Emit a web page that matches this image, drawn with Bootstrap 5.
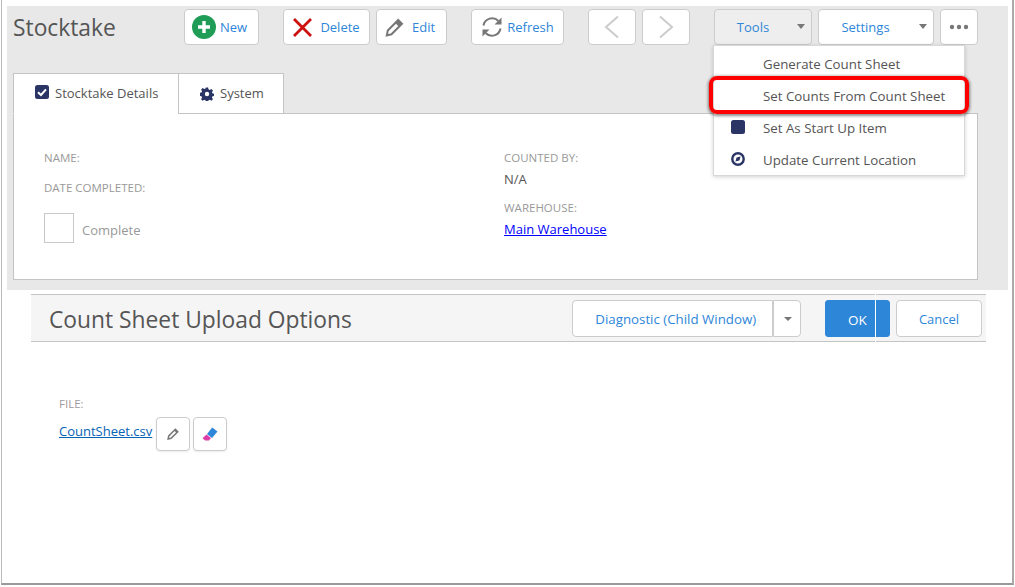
<!DOCTYPE html>
<html lang="en">
<head>
<meta charset="utf-8">
<title>Stocktake</title>
<link href="https://cdn.jsdelivr.net/npm/bootstrap@5.3.0/dist/css/bootstrap.min.css" rel="stylesheet">
<style>
html,body{height:100%;}
body{background:#fff;font-family:"Open Sans",sans-serif;font-size:13px;color:#555;overflow:hidden;}
.shot-frame{position:relative;width:1013px;height:585px;border-left:1px solid #bbb;border-right:2px solid #aaa;border-bottom:2px solid #999;margin-left:1px;padding-top:6px;background:#fff;overflow:hidden;}
.top-panel{margin-left:5px;width:1001px;height:284px;background:#e8e8e8;padding:3px 6px 0 6px;}
.tool-row{height:36px;}
.page-title{width:171px;font-size:22.8px;line-height:36px;color:#555;margin:1px 0 -1px 0;}
.tb{height:36px;background:#fff;border:1px solid #ccc;border-radius:4px;color:#2e86d8;font-size:13px;padding:2px 0 0 0;display:flex;align-items:center;justify-content:center;}
.tb:hover{background:#fff;color:#2e86d8;border-color:#ccc;}
.tb svg{position:relative;top:-1px;}
.w-new{width:75px;margin-right:24px;padding-right:4px;}
.w-del{width:87px;margin-right:6px;}
.w-edit{width:71px;margin-right:24px;padding-right:3px;}
.w-ref{width:93px;margin-right:24px;}
.w-nav{width:48px;}
.w-nav.first{margin-right:6px;}
.w-nav.last{margin-right:24px;}
.w-tools{width:98px;margin-right:6px;background:#eee;position:relative;}
.w-tools:hover{background:#eee;}
.w-set{width:116px;margin-right:6px;position:relative;}
.w-more{width:38px;}
.caret-mark{position:absolute;right:6px;top:14px;width:0;height:0;border-left:4px solid transparent;border-right:4px solid transparent;border-top:5px solid #777;}
.tb-lab-tools{margin-right:20px;}
.tb-lab-set{margin-right:21px;}
.tab-strip{margin-top:28px;height:40px;position:relative;z-index:1;}
.tab-item{height:41px;background:#fff;border:1px solid #c4c4c4;font-size:13px;color:#555;display:flex;align-items:center;}
.tab-a{width:166px;padding-left:21px;border-bottom-color:#fff;}
.tab-b{width:106px;margin-left:-1px;padding-left:21px;border-left-color:#c4c4c4;}
.tab-item svg{margin-right:6px;}
.tab-a svg{position:relative;top:-2px;margin-right:6px;}
.detail-box{width:965px;height:167px;background:#fff;border:1px solid #c4c4c4;padding:36px 30px 0 30px;}
.fld-col-a{width:460px;}
.fld-lab{font-size:11.5px;line-height:15px;color:#999;text-transform:uppercase;}
.lab-gap{margin-top:15px;}
.fld-val{font-size:13px;line-height:18px;color:#555;margin-top:5px;}
.lab-wh{margin-top:12px;}
.fld-link{font-size:13px;line-height:18px;color:#00f;margin-top:5px;display:block;}
.check-row{margin-top:18px;}
.check-sq{width:30px;height:30px;border:1px solid #c8c8c8;background:#fff;}
.check-lab{font-size:13px;color:#999;margin-left:8px;padding-top:5px;}
.menu-float{position:absolute;left:711px;top:45px;width:252px;height:131px;background:#fff;border:1px solid #d8d8d8;box-shadow:0 1px 4px rgba(0,0,0,.18);padding:3px 0 0 0;z-index:3;}
.menu-line{height:32px;display:flex;align-items:center;padding-left:49px;font-size:13.3px;color:#555;position:relative;}
.menu-ico{position:absolute;left:17px;top:7px;}
.red-mark{position:absolute;left:707px;top:76px;width:260px;height:38px;border:4px solid #f00;border-radius:8px;box-shadow:0 1px 3px 1px rgba(0,0,0,.45);z-index:4;}
.sub-head{margin:4px 0 0 29px;width:955px;height:48px;background:#f5f5f5;border-top:1px solid #c4c4c4;border-bottom:1px solid #c4c4c4;padding:5px 4px 0 18px;position:relative;}
.sub-title{font-size:22.8px;line-height:36px;color:#555;margin:2px 0 0 0;width:523px;}
.split-main{width:200.5px;height:37px;border:1px solid #ccc;border-radius:4px 0 0 4px;background:#fff;color:#2e86d8;font-size:13.3px;padding:3px 0 0 7px;}
.split-drop{width:28.5px;height:37px;border:1px solid #ccc;border-left:1px solid #ccc;border-radius:0 4px 4px 0;background:#fff;position:relative;padding:0;margin-right:24px;}
.split-drop .caret-mark{left:10px;right:auto;top:16px;border-top-width:4px;}
.ok-btn{width:65px;height:37px;background:#2e86d8;border:1px solid #2e86d8;color:#fff;font-size:13.5px;border-radius:3px;padding:3px 0 0 0;margin-right:6px;}
.ok-btn:hover{background:#2e86d8;border-color:#2e86d8;color:#fff;}
.cancel-btn{width:86px;height:37px;background:#fff;border:1px solid #ccc;color:#2e86d8;font-size:13px;border-radius:4px;padding:3px 0 0 0;}
.cancel-btn:hover{background:#fff;color:#2e86d8;border-color:#ccc;}
.seam-line{position:absolute;left:844px;top:-1px;width:1px;height:48px;background:#fff;}
.file-area{margin:54px 0 0 57px;}
.file-lab{font-size:11.5px;line-height:15px;color:#a09aa0;text-transform:uppercase;}
.file-row{margin-top:6px;height:34px;}
.file-link{font-size:13px;color:#0563b5;line-height:18px;}
.link-box{width:97px;padding-top:5px;}
.sq-btn{width:34px;height:34px;background:#fff;border:1px solid #ccc;border-radius:4px;box-shadow:0 1px 2px rgba(0,0,0,.08);padding:0;display:flex;align-items:center;justify-content:center;margin-right:3px;}
.sq-btn:hover{background:#fff;border-color:#ccc;}
</style>
</head>
<body>
<div class="shot-frame">
  <div class="top-panel">
    <div class="d-flex tool-row">
      <h1 class="page-title">Stocktake</h1>
      <button class="btn tb w-new" type="button">
        <svg class="me-1" width="24" height="24" viewBox="0 0 24 24"><circle cx="12" cy="12" r="12" fill="#1f9d57"/><path d="M12 6v12M6 12h12" stroke="#fff" stroke-width="3.4"/></svg>New
      </button>
      <button class="btn tb w-del" type="button">
        <svg class="me-2" width="19" height="19" viewBox="0 0 19 19"><path d="M1 1 18 18M18 1 1 18" stroke="#cc1111" stroke-width="2.8"/></svg>Delete
      </button>
      <button class="btn tb w-edit" type="button">
        <svg class="me-2" width="19" height="19" viewBox="0 0 19 19"><path d="M13.2 2 17 5.8 6.5 16.3 1.8 17.4 2.8 12.6Z" fill="none" stroke="#777" stroke-width="2"/><path d="M11 4.4 14.8 8.2" stroke="#777" stroke-width="2"/><path d="M13.2 2 17 5.8 15 7.8 11.2 4Z" fill="#777"/></svg>Edit
      </button>
      <button class="btn tb w-ref" type="button">
        <svg class="me-1" width="22" height="22" viewBox="0 0 22 22"><path d="M2.5 9.5A8.7 8.7 0 0 1 17.4 5" fill="none" stroke="#777" stroke-width="2"/><path d="M20.5 1.5v7h-7Z" fill="#777"/><path d="M19.5 12.5A8.7 8.7 0 0 1 4.6 17" fill="none" stroke="#777" stroke-width="2"/><path d="M1.5 20.5v-7h7Z" fill="#777"/></svg>Refresh
      </button>
      <button class="btn tb w-nav first" type="button" aria-label="Previous">
        <svg width="16" height="24" viewBox="0 0 16 24"><path d="M14 1.5 2 12l12 10.5" fill="none" stroke="#ccc" stroke-width="2"/></svg>
      </button>
      <button class="btn tb w-nav last" type="button" aria-label="Next">
        <svg width="16" height="24" viewBox="0 0 16 24"><path d="M2 1.5 14 12 2 22.5" fill="none" stroke="#ccc" stroke-width="2"/></svg>
      </button>
      <button class="btn tb w-tools" type="button"><span class="tb-lab-tools">Tools</span><span class="caret-mark"></span></button>
      <button class="btn tb w-set" type="button"><span class="tb-lab-set">Settings</span><span class="caret-mark"></span></button>
      <button class="btn tb w-more" type="button" aria-label="More">
        <svg width="20" height="6" viewBox="0 0 20 6"><circle cx="3" cy="3" r="2.2" fill="#777"/><circle cx="10" cy="3" r="2.2" fill="#777"/><circle cx="17" cy="3" r="2.2" fill="#777"/></svg>
      </button>
    </div>
    <div class="d-flex tab-strip">
      <div class="tab-item tab-a">
        <svg width="14" height="14" viewBox="0 0 14 14"><rect width="14" height="14" rx="2.5" fill="#2a3566"/><path d="M3 7.2 6 10l5-5.6" fill="none" stroke="#fff" stroke-width="2"/></svg>Stocktake Details
      </div>
      <div class="tab-item tab-b">
        <svg width="14" height="14" viewBox="0 0 14 14"><path d="M5.8 0h2.4l.4 2 1.3.6 1.8-1.1 1.7 1.7-1.1 1.8.6 1.3 2 .4v2.4l-2 .4-.6 1.3 1.1 1.8-1.7 1.7-1.8-1.1-1.3.6-.4 2H5.8l-.4-2-1.3-.6-1.8 1.1-1.7-1.7 1.1-1.8-.6-1.3-2-.4V5.8l2-.4.6-1.3L.6 2.3l1.7-1.7 1.8 1.1 1.3-.6Z" fill="#2a3566" transform="translate(.5 .5) scale(.93)"/><circle cx="7" cy="7" r="2.2" fill="#fff"/></svg>System
      </div>
    </div>
    <div class="detail-box d-flex">
      <div class="fld-col-a">
        <div class="fld-lab">Name:</div>
        <div class="fld-lab lab-gap">Date Completed:</div>
        <div class="d-flex align-items-center check-row">
          <span class="check-sq"></span><span class="check-lab">Complete</span>
        </div>
      </div>
      <div>
        <div class="fld-lab">Counted By:</div>
        <div class="fld-val">N/A</div>
        <div class="fld-lab lab-wh">Warehouse:</div>
        <a class="fld-link" href="#">Main Warehouse</a>
      </div>
    </div>
  </div>

  <div class="menu-float">
    <div class="menu-line">Generate Count Sheet</div>
    <div class="menu-line">Set Counts From Count Sheet</div>
    <div class="menu-line"><svg class="menu-ico" width="14" height="14" viewBox="0 0 14 14"><rect width="14" height="14" rx="2.5" fill="#2a3566"/></svg>Set As Start Up Item</div>
    <div class="menu-line"><svg class="menu-ico" width="14" height="14" viewBox="0 0 14 14"><circle cx="7" cy="7" r="5.7" fill="none" stroke="#2a3566" stroke-width="2.4"/><path d="M9.6 4.4 8.4 8.4 4.4 9.6 5.6 5.6Z" fill="#2a3566"/></svg>Update Current Location</div>
  </div>
  <div class="red-mark"></div>

  <div class="sub-head d-flex">
    <h2 class="sub-title">Count Sheet Upload Options</h2>
    <button class="btn split-main" type="button">Diagnostic (Child Window)</button>
    <button class="btn split-drop" type="button" aria-label="Options"><span class="caret-mark"></span></button>
    <button class="btn ok-btn" type="button">OK</button>
    <button class="btn cancel-btn" type="button">Cancel</button>
    <span class="seam-line"></span>
  </div>
  <div class="file-area">
    <div class="file-lab">File:</div>
    <div class="d-flex file-row align-items-start">
      <div class="link-box"><a class="file-link" href="#">CountSheet.csv</a></div>
      <button class="btn sq-btn" type="button" aria-label="Edit file">
        <svg width="12" height="12" viewBox="0 0 19 19"><path d="M13.2 2 17 5.8 6.5 16.3 1.8 17.4 2.8 12.6Z" fill="none" stroke="#777" stroke-width="2.4"/><path d="M13.2 2 17 5.8 15 7.8 11.2 4Z" fill="#777"/></svg>
      </button>
      <button class="btn sq-btn" type="button" aria-label="Clear file">
        <svg width="16" height="14" viewBox="0 0 16 14"><path d="M10.2.5 15.5 4.6 10 11 5 7Z" fill="#2e86d8"/><path d="M4.5 7.5 9 11l-2 2.5H3.2L.5 11.2Z" fill="#dd3da8"/></svg>
      </button>
    </div>
  </div>
</div>
<script src="https://cdn.jsdelivr.net/npm/bootstrap@5.3.0/dist/js/bootstrap.bundle.min.js"></script>
</body>
</html>
